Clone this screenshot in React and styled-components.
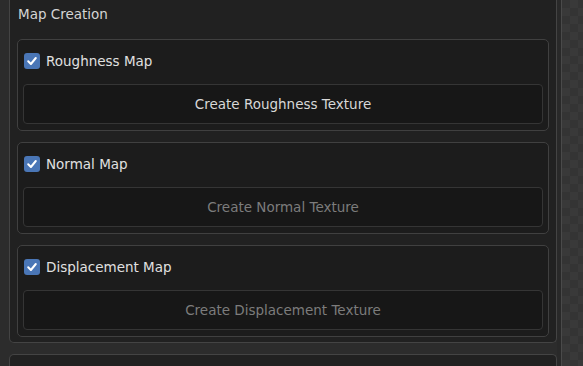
import React from 'react'
import styled, { createGlobalStyle } from 'styled-components'

const GlobalStyle = createGlobalStyle`
  html, body {
    margin: 0;
    padding: 0;
    background: #2c2c2c;
  }
  * {
    box-sizing: border-box;
  }
`

const Screen = styled.div`
  display: flex;
  width: 583px;
  height: 366px;
  overflow: hidden;
  font-family: "DejaVu Sans", "Liberation Sans", sans-serif;
  font-size: 13.5px;
`

const Gutter = styled.div`
  width: 9px;
  flex: none;
  background: #2c2c2c;
`

const Column = styled.div`
  width: 548px;
  flex: none;
  display: flex;
  flex-direction: column;
  gap: 11px;
`

const Panel = styled.div`
  background: #212121;
  border: 1px solid #444444;
  border-top: none;
  border-radius: 0 0 5px 5px;
  padding: 0 7px 5px 7px;
  display: flex;
  flex-direction: column;
  gap: 11px;
`

const NextPanel = styled.div`
  flex: 1;
  background: #212121;
  border: 1px solid #444444;
  border-bottom: none;
  border-radius: 5px 5px 0 0;
`

const Title = styled.div`
  height: 28px;
  padding: 6px 0 0 1px;
  line-height: 16px;
  color: #d4d4d4;
`

const Section = styled.div`
  background: #1c1c1c;
  border: 1px solid #404040;
  border-radius: 5px;
  padding: 0 5px 6px 5px;
`

const Header = styled.label`
  display: flex;
  align-items: center;
  gap: 6px;
  height: 17px;
  margin: 12px 0 15px 1px;
  color: #e0e0e0;
  line-height: 16px;
`

const Check = styled.span`
  width: 16px;
  height: 16px;
  border-radius: 3px;
  background: #4a76b6;
  display: flex;
  align-items: center;
  justify-content: center;
  flex: none;
`

const Button = styled.div`
  height: 40px;
  display: flex;
  align-items: center;
  justify-content: center;
  background: #171717;
  border: 1px solid #353535;
  border-radius: 4px;
  color: ${p => (p.$disabled ? '#7c7c7c' : '#d8d8d8')};
`

const Edge = styled.div`
  width: 5px;
  flex: none;
  background: #292929;
  border-right: 1px solid #4a4a4a;
`

const Scroll = styled.div`
  flex: 1;
  background-color: #373737;
  background-image: repeating-conic-gradient(#393939 0 25%, #343434 0 50%);
  background-size: 16px 16px;
`

const Tick = () => (
  <svg width="12" height="12" viewBox="0 0 12 12">
    <path d="M2.2 6.3 L4.9 9 L9.8 3" fill="none" stroke="#fff" strokeWidth="2" strokeLinecap="round" strokeLinejoin="round" />
  </svg>
)

const maps = [
  { label: 'Roughness Map', button: 'Create Roughness Texture', disabled: false },
  { label: 'Normal Map', button: 'Create Normal Texture', disabled: true },
  { label: 'Displacement Map', button: 'Create Displacement Texture', disabled: true },
]

export default function App() {
  return (
    <>
      <GlobalStyle />
      <Screen>
        <Gutter />
        <Column>
          <Panel>
            <Title>Map Creation</Title>
            {maps.map(m => (
              <Section key={m.label}>
                <Header>
                  <Check><Tick /></Check>
                  {m.label}
                </Header>
                <Button $disabled={m.disabled}>{m.button}</Button>
              </Section>
            ))}
          </Panel>
          <NextPanel />
        </Column>
        <Edge />
        <Scroll />
      </Screen>
    </>
  )
}
